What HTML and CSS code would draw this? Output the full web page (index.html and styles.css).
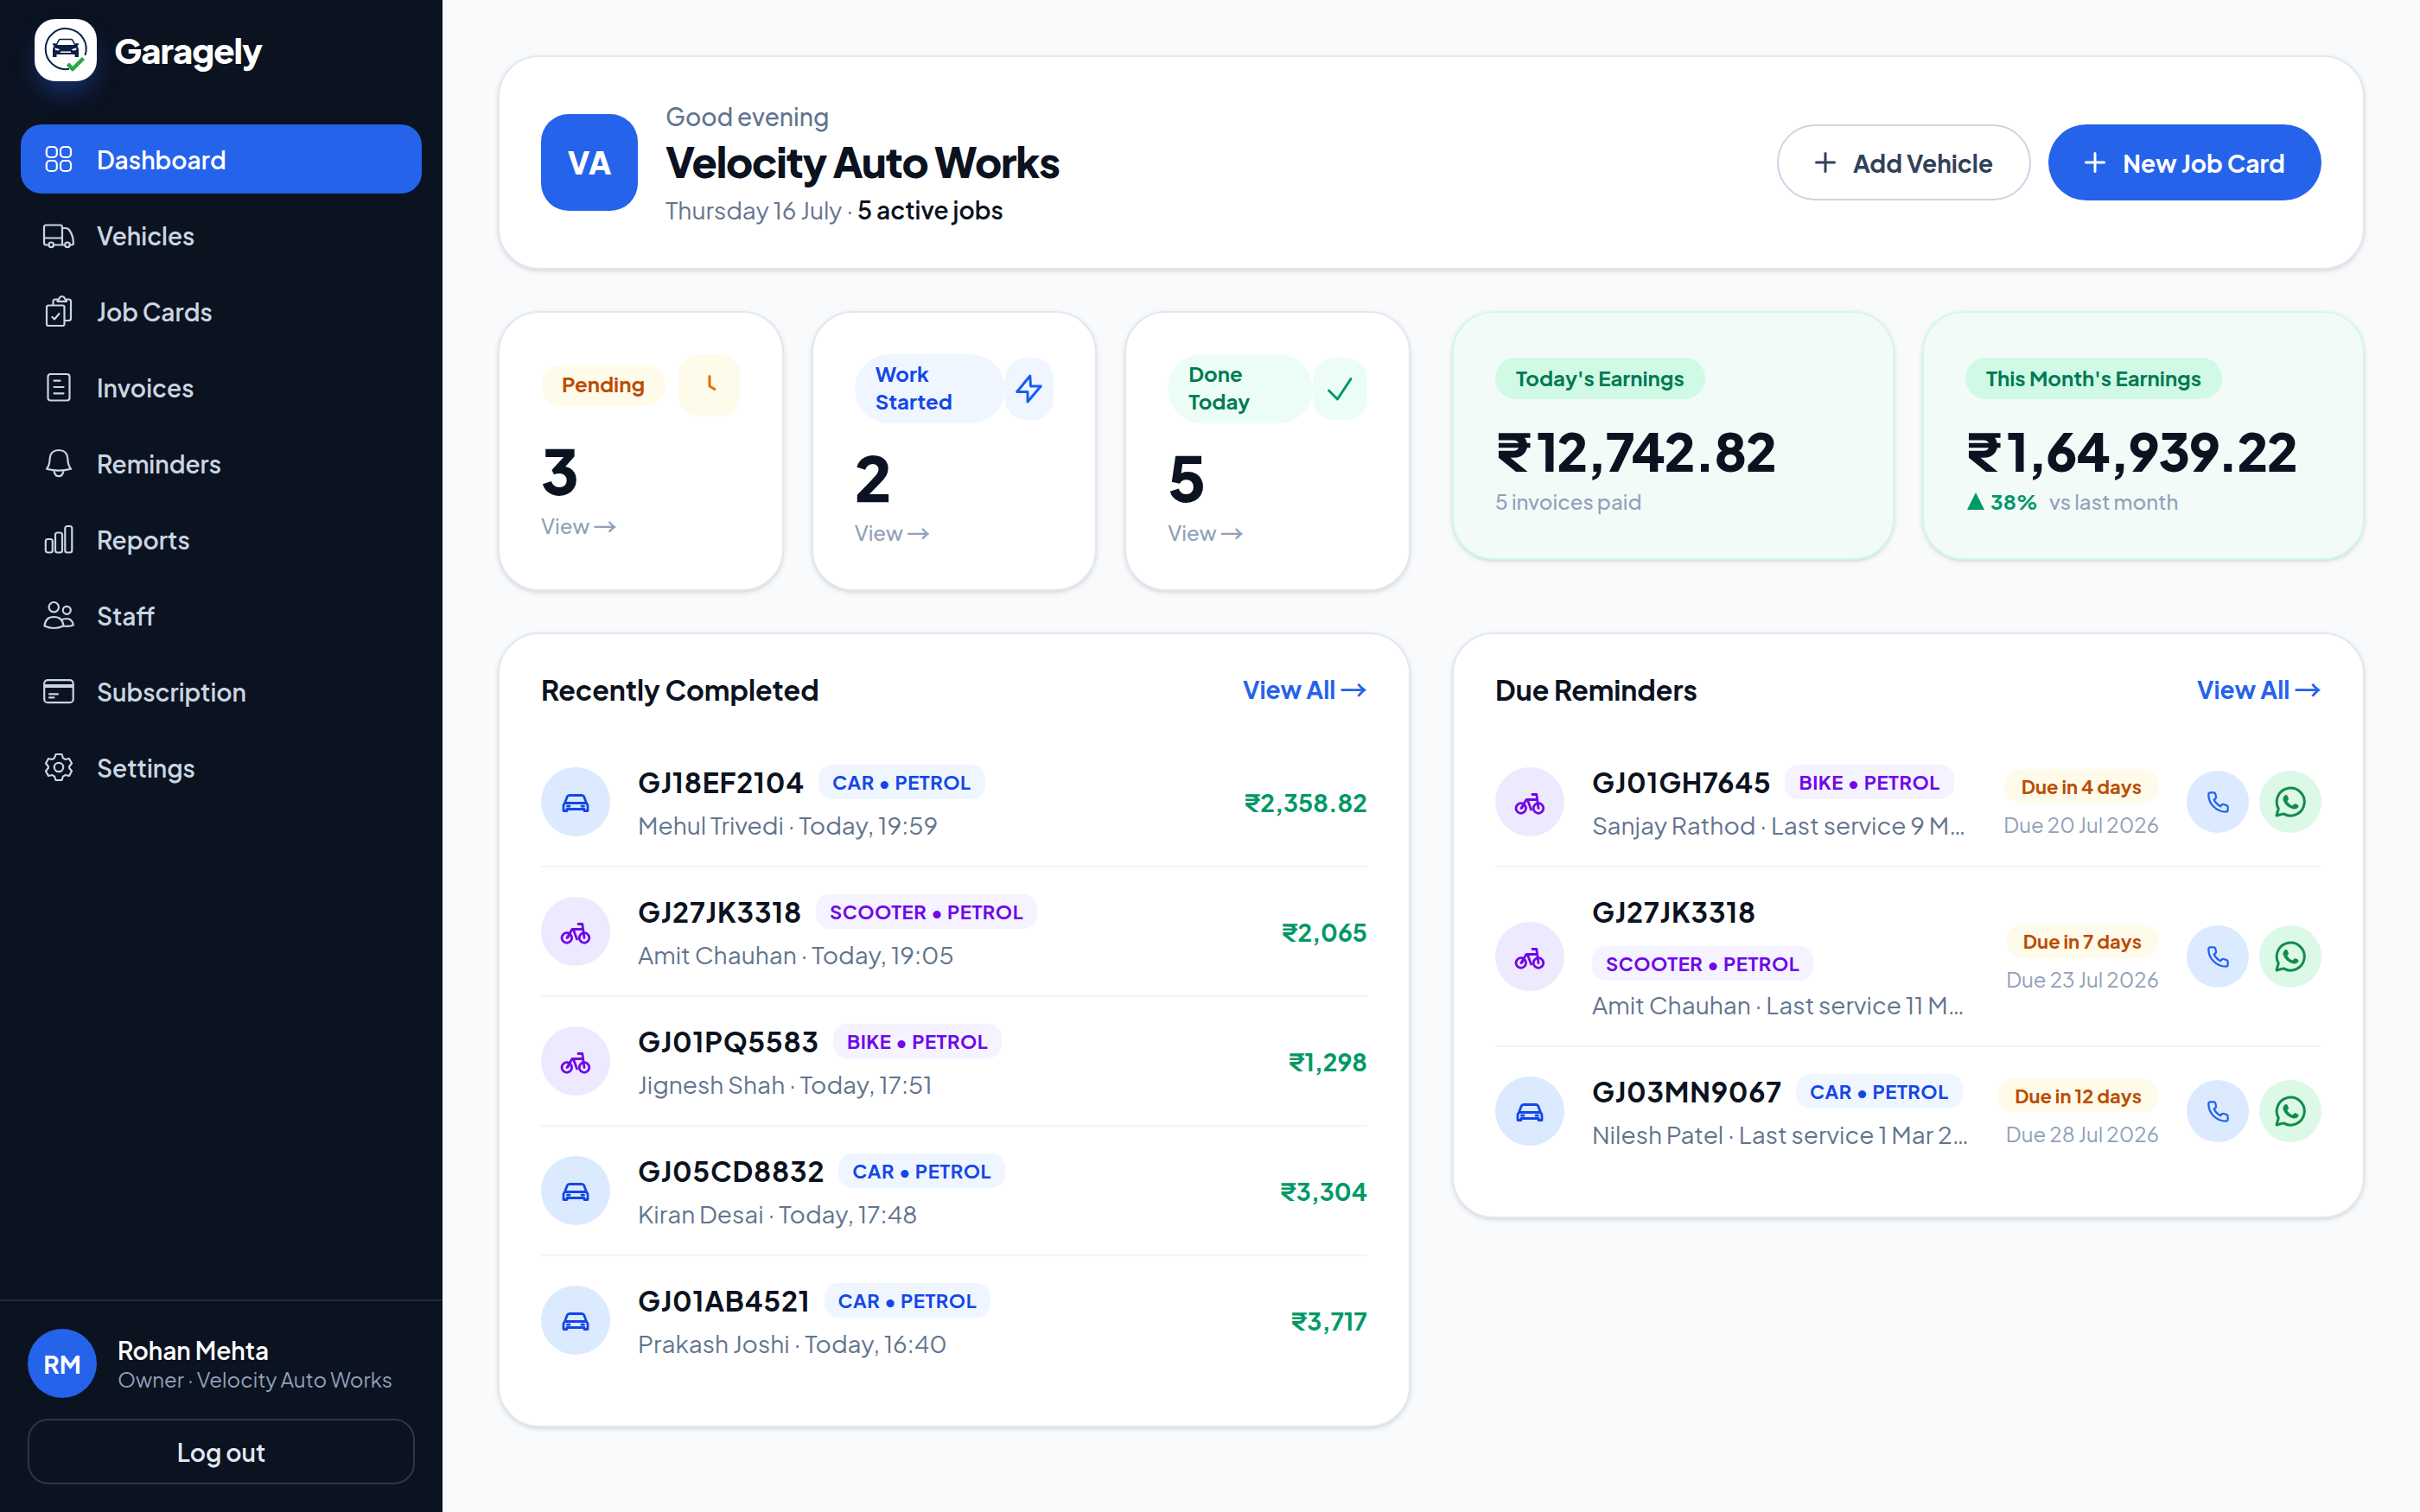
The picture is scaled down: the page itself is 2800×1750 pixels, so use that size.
FILE: index.html
```html
<!DOCTYPE html>
<html lang="en">
<head>
    <meta charset="utf-8">
    <title>Garagely</title>
    <link rel="stylesheet" href="styles.css">
</head>
<body>
    <svg class="sprite">
        <symbol id="car" viewBox="0 0 40 40">
            <path d="M7.500 21.500 L10.200 14.200 Q11 12.500 13 12.500 H27 Q29 12.500 29.800 14.200 L32.500 21.500 M7.500 21.500 H32.500 Q34 23 34 25 V30.500 H30 V28.500 H10 V30.500 H6 V25 Q6 23 7.500 21.500 M10.500 25.200 H13 M27 25.200 H29.500"/>
        </symbol>
        <symbol id="bike" viewBox="0 0 40 40">
            <circle cx="9.800" cy="27.500" r="5.800"/>
            <circle cx="30" cy="27.500" r="5.800"/>
            <path d="M10 27.500 L16 17.500 H26.500 M17.500 18 L21.500 29 M23 11.500 H27.800 L30 27.500 M14 21 L11 27"/>
        </symbol>
        <symbol id="phone" viewBox="0 0 24 24">
            <path d="M1.300 3.500 Q1.300 1.500 3.200 1.300 H7 Q8.300 1.300 8.800 2.600 L9.700 6 Q10 7 9 7.900 L7.300 9.200 Q9.500 14 14.600 16.600 L16 14.900 Q16.800 14 18 14.400 L21.400 15.500 Q22.700 16 22.700 17.300 V20.800 Q22.600 22.700 20.500 22.700 Q12.500 22.600 6.800 16.800 Q1.300 11 1.300 3.500 Z"/>
        </symbol>
        <symbol id="whatsapp" viewBox="0 0 36 36">
            <path class="bubble" d="M2 34 L4.300 25.900 A16 16 0 1 1 10.200 31.900 Z"/>
            <path class="handset" d="M9.500 14.500 Q9.600 11.500 12 10.200 Q13.800 9.800 14.500 10.800 L16 14.300 Q16.200 15.300 14.300 17.200 Q16.700 21.200 20.600 22.600 L22.600 20.500 Q23.300 19.900 24.200 20.300 L27.300 21.900 Q28 22.500 27 24.500 Q25 27 21.500 26.500 Q12.500 24 9.500 16 Z"/>
        </symbol>
        <symbol id="plus" viewBox="0 0 24 24">
            <path d="M12 1.500 V22.500 M1.500 12 H22.500"/>
        </symbol>
    </svg>

    <div class="layout">
        <aside class="sidebar">
            <div class="brand">
                <div class="brand_logo">
                    <svg viewBox="0 0 72 72">
                        <path d="M40 57.800 A23.500 23.500 0 1 1 58.500 42" fill="none" stroke="#0b1f44" stroke-width="2"/>
                        <path d="M25 30.500 L28 24.500 Q28.500 23.500 30 23.500 H42 Q43.500 23.500 44 24.500 L47 30.500" fill="none" stroke="#0b1f44" stroke-width="1.600"/>
                        <path class="solid" d="M20.500 28.500 L24 28 L26 30 H46 L48 28 L51.500 28.500 L49.500 31.500 Q51 33 51 36 V44 H46.500 V41 H25.500 V44 H21 V36 Q21 33 22.500 31.500 Z" fill="#0b1f44"/>
                        <path class="solid" d="M23.500 33.500 L29 35 L28 36.500 L24 36 Z M48.500 33.500 L43 35 L44 36.500 L48 36 Z M30 37.500 H42 V39 H30 Z" fill="#fff"/>
                        <path d="M38.500 52 L44 58 L56.500 45.500" fill="none" stroke="#28a745" stroke-width="4.500"/>
                    </svg>
                </div>
                <span class="brand_name">Garagely</span>
            </div>

            <nav class="nav">
                <a class="nav_item active">
                    <svg viewBox="0 0 48 48"><rect x="9.800" y="10" width="12" height="12" rx="4"/><rect x="26" y="10" width="12" height="12" rx="4"/><rect x="9.800" y="26" width="12" height="12" rx="4"/><rect x="26" y="26" width="12" height="12" rx="4"/></svg>
                    <span>Dashboard</span>
                </a>
                <a class="nav_item">
                    <svg viewBox="0 0 48 48"><path d="M12 35.500 H9.500 Q7 35.500 7 33 V15 Q7 12.500 9.500 12.500 H25.500 Q28 12.500 28 15 V35.500 M18.500 35.500 H31 M37 35.500 H38.500 Q41 35.500 41 33 Q40.500 24 36 18 Q34.500 16 32 16 H28 M7 27.500 H28"/><circle cx="15.300" cy="35.300" r="2.800"/><circle cx="34" cy="35.300" r="2.800"/></svg>
                    <span>Vehicles</span>
                </a>
                <a class="nav_item">
                    <svg viewBox="0 0 48 48"><rect x="10" y="17.500" width="20.500" height="23.500" rx="2"/><path d="M17.500 17 V13 Q17.500 10.500 20 10.500 H22.500 M33 10.500 H35.500 Q38 10.500 38 13 V32.500 Q38 35 35.500 35 H31 M16.500 31 L19 33.500 L24.500 27"/><path d="M22.500 12.800 V11.500 Q24.500 10.500 25 8.500 Q27.500 5.500 30.500 8.500 Q31 10.500 33 11.500 V12.800 Z"/></svg>
                    <span>Job Cards</span>
                </a>
                <a class="nav_item">
                    <svg viewBox="0 0 48 48"><rect x="11.500" y="9" width="25" height="30.500" rx="3"/><path d="M18.500 16.700 H25.500 M18.500 24 H29.500 M18.500 31.300 H29.500"/></svg>
                    <span>Invoices</span>
                </a>
                <a class="nav_item">
                    <svg viewBox="0 0 48 48"><path d="M24 9 Q33.500 9 34.300 18.500 C34.500 25 36 28.500 38 30.800 Q24 34.500 10 30.800 C12 28.500 13.500 25 13.700 18.500 Q14.500 9 24 9 Z M18.500 33 Q19.500 39.200 24 39.200 Q28.500 39.200 29.500 33"/></svg>
                    <span>Reminders</span>
                </a>
                <a class="nav_item">
                    <svg viewBox="0 0 48 48"><rect x="8.800" y="24" width="8" height="15.500" rx="2.500"/><rect x="20" y="16.500" width="8" height="23" rx="2.500"/><rect x="31.300" y="9" width="8" height="30.500" rx="2.500"/></svg>
                    <span>Reports</span>
                </a>
                <a class="nav_item">
                    <svg viewBox="0 0 48 48"><circle cx="18.300" cy="14.700" r="5.700"/><circle cx="33.300" cy="18.300" r="4.500"/><path d="M7.500 36.500 Q8.500 26 18.300 26 Q28.500 26 29.500 36.500 Q18.300 41.500 7.500 36.500 Z M27.500 29.500 Q30 28 33 28 Q39.500 28 40.800 35.500 Q36 37.500 29.500 36.500"/></svg>
                    <span>Staff</span>
                </a>
                <a class="nav_item">
                    <svg viewBox="0 0 48 48"><rect x="7.200" y="11.200" width="33.500" height="26" rx="4"/><path d="M7.500 18 H40.500" stroke-width="4" stroke-linecap="butt"/><path d="M13 27.300 H23 M13 31.300 H18.500"/></svg>
                    <span>Subscription</span>
                </a>
                <a class="nav_item">
                    <svg viewBox="0 0 48 48"><path d="M20.500 9 H27.500 L29 13.500 Q30.500 14 31.500 15 L36 14 L39 19.500 L36.200 23 V25 L39 28.500 L36 34 L31.500 33 Q30.500 34 29 34.500 L27.500 39 H20.500 L19 34.500 Q17.500 34 16.500 33 L12 34 L9 28.500 L11.800 25 V23 L9 19.500 L12 14 L16.500 15 Q17.500 14 19 13.500 Z"/><circle cx="24" cy="24" r="5.200"/></svg>
                    <span>Settings</span>
                </a>
            </nav>

            <div class="account">
                <div class="account_user">
                    <div class="account_avatar">RM</div>
                    <div>
                        <div class="account_name">Rohan Mehta</div>
                        <div class="account_role">Owner · Velocity Auto Works</div>
                    </div>
                </div>
                <button class="logout">Log out</button>
            </div>
        </aside>

        <main class="content">
            <header class="card hero">
                <div class="hero_avatar">VA</div>
                <div class="hero_text">
                    <div class="hero_greeting">Good evening</div>
                    <h1>Velocity Auto Works</h1>
                    <div class="hero_date">Thursday 16 July · <b>5 active jobs</b></div>
                </div>
                <div class="hero_actions">
                    <button class="btn btn_outline"><svg><use href="#plus"/></svg>Add Vehicle</button>
                    <button class="btn btn_primary"><svg><use href="#plus"/></svg>New Job Card</button>
                </div>
            </header>

            <div class="columns">
                <div class="stats">
                    <div class="card stat amber">
                        <div class="stat_top">
                            <span class="pill">Pending</span>
                            <span class="tile"><svg viewBox="0 0 48 48"><path d="M24 13.500 V25 L30 28.500"/></svg></span>
                        </div>
                        <div class="stat_value">3</div>
                        <div class="stat_link">View <i>→</i></div>
                    </div>
                    <div class="card stat blue">
                        <div class="stat_top">
                            <span class="pill wrap">Work Started</span>
                            <span class="tile"><svg viewBox="0 0 48 48"><path d="M24.800 9 L9.700 27.500 H22 V39 L37.300 21 H25.500 Z"/></svg></span>
                        </div>
                        <div class="stat_value">2</div>
                        <div class="stat_link">View <i>→</i></div>
                    </div>
                    <div class="card stat green">
                        <div class="stat_top">
                            <span class="pill wrap">Done Today</span>
                            <span class="tile"><svg viewBox="0 0 48 48"><path d="M10.500 26 L20.500 36 L36 12.500"/></svg></span>
                        </div>
                        <div class="stat_value">5</div>
                        <div class="stat_link">View <i>→</i></div>
                    </div>
                </div>

                <div class="earnings">
                    <div class="card earning">
                        <span class="pill">Today's Earnings</span>
                        <div class="earning_value"><span>₹</span>12,742.82</div>
                        <div class="earning_note">5 invoices paid</div>
                    </div>
                    <div class="card earning">
                        <span class="pill">This Month's Earnings</span>
                        <div class="earning_value"><span>₹</span>1,64,939.22</div>
                        <div class="earning_note"><svg class="up" viewBox="0 0 20 20"><path d="M10 0 L20 20 H0 Z"/></svg><b>38%</b>vs last month</div>
                    </div>
                </div>

                <section class="card panel">
                    <div class="panel_head"><h2>Recently Completed</h2><a>View All <i>→</i></a></div>
                    <div class="row car">
                        <div class="row_icon"><svg><use href="#car"/></svg></div>
                        <div class="row_text">
                            <div class="row_title"><span class="plate">GJ18EF2104</span><span class="tag">CAR • PETROL</span></div>
                            <div class="row_sub">Mehul Trivedi · Today, 19:59</div>
                        </div>
                        <div class="amount">₹2,358.82</div>
                    </div>
                    <div class="row bike">
                        <div class="row_icon"><svg><use href="#bike"/></svg></div>
                        <div class="row_text">
                            <div class="row_title"><span class="plate">GJ27JK3318</span><span class="tag">SCOOTER • PETROL</span></div>
                            <div class="row_sub">Amit Chauhan · Today, 19:05</div>
                        </div>
                        <div class="amount">₹2,065</div>
                    </div>
                    <div class="row bike">
                        <div class="row_icon"><svg><use href="#bike"/></svg></div>
                        <div class="row_text">
                            <div class="row_title"><span class="plate">GJ01PQ5583</span><span class="tag">BIKE • PETROL</span></div>
                            <div class="row_sub">Jignesh Shah · Today, 17:51</div>
                        </div>
                        <div class="amount">₹1,298</div>
                    </div>
                    <div class="row car">
                        <div class="row_icon"><svg><use href="#car"/></svg></div>
                        <div class="row_text">
                            <div class="row_title"><span class="plate">GJ05CD8832</span><span class="tag">CAR • PETROL</span></div>
                            <div class="row_sub">Kiran Desai · Today, 17:48</div>
                        </div>
                        <div class="amount">₹3,304</div>
                    </div>
                    <div class="row car">
                        <div class="row_icon"><svg><use href="#car"/></svg></div>
                        <div class="row_text">
                            <div class="row_title"><span class="plate">GJ01AB4521</span><span class="tag">CAR • PETROL</span></div>
                            <div class="row_sub">Prakash Joshi · Today, 16:40</div>
                        </div>
                        <div class="amount">₹3,717</div>
                    </div>
                </section>

                <section class="card panel">
                    <div class="panel_head"><h2>Due Reminders</h2><a>View All <i>→</i></a></div>
                    <div class="row bike">
                        <div class="row_icon"><svg><use href="#bike"/></svg></div>
                        <div class="row_text">
                            <div class="row_title"><span class="plate">GJ01GH7645</span><span class="tag">BIKE • PETROL</span></div>
                            <div class="row_sub">Sanjay Rathod · Last service 9 M…</div>
                        </div>
                        <div class="due"><span class="due_pill">Due in 4 days</span><span class="due_date">Due 20 Jul 2026</span></div>
                        <div class="contact">
                            <a class="call"><svg><use href="#phone"/></svg></a>
                            <a class="chat"><svg><use href="#whatsapp"/></svg></a>
                        </div>
                    </div>
                    <div class="row bike tall">
                        <div class="row_icon"><svg><use href="#bike"/></svg></div>
                        <div class="row_text">
                            <div class="row_title"><span class="plate">GJ27JK3318</span><span class="tag">SCOOTER • PETROL</span></div>
                            <div class="row_sub">Amit Chauhan · Last service 11 M…</div>
                        </div>
                        <div class="due"><span class="due_pill">Due in 7 days</span><span class="due_date">Due 23 Jul 2026</span></div>
                        <div class="contact">
                            <a class="call"><svg><use href="#phone"/></svg></a>
                            <a class="chat"><svg><use href="#whatsapp"/></svg></a>
                        </div>
                    </div>
                    <div class="row car">
                        <div class="row_icon"><svg><use href="#car"/></svg></div>
                        <div class="row_text">
                            <div class="row_title"><span class="plate">GJ03MN9067</span><span class="tag">CAR • PETROL</span></div>
                            <div class="row_sub">Nilesh Patel · Last service 1 Mar 2…</div>
                        </div>
                        <div class="due"><span class="due_pill">Due in 12 days</span><span class="due_date">Due 28 Jul 2026</span></div>
                        <div class="contact">
                            <a class="call"><svg><use href="#phone"/></svg></a>
                            <a class="chat"><svg><use href="#whatsapp"/></svg></a>
                        </div>
                    </div>
                </section>
            </div>
        </main>
    </div>
</body>
</html>
```

FILE: styles.css
```css
* {
    box-sizing: border-box;
}

body {
    margin: 0;
    background-color: #f8fafc;
    color: #0b1220;
    font-family: "Plus Jakarta Sans", Inter, "Noto Sans", sans-serif;
    font-size: 28px;
}

h1, h2 {
    margin: 0;
}

/* arrows */
i {
    font-family: "Noto Sans CJK JP", sans-serif;
    font-size: 1.13em;
    font-style: normal;
    font-weight: 500;
    line-height: 1;
    vertical-align: -2px;
}

svg {
    display: block;
    fill: none;
    stroke: currentColor;
    stroke-linecap: round;
    stroke-linejoin: round;
}

button {
    font-family: inherit;
    font-size: 28px;
}

.sprite {
    display: none;
}

.layout {
    display: flex;
    height: 1750px;
}

/* sidebar */
.sidebar {
    display: flex;
    flex-direction: column;
    width: 512px;
    background-color: #0b1220;
    color: #cad5e2;
}

.brand {
    display: flex;
    align-items: center;
    gap: 20px;
    height: 144px;
    padding: 0 40px 28px;
}

.brand_logo {
    width: 72px;
    height: 72px;
    border-radius: 24px;
    background-color: #fff;
    box-shadow: 0 16px 32px -8px rgba(37, 99, 235, 0.5);
}

.brand_logo svg {
    stroke-linecap: butt;
}

.solid {
    stroke: none;
}

.brand_name {
    padding-bottom: 2px;
    color: #fff;
    font-size: 40px;
    font-weight: 800;
    letter-spacing: -1px;
}

.nav {
    display: flex;
    flex-direction: column;
    gap: 8px;
    padding: 0 24px;
    flex: 1;
}

.nav_item {
    display: flex;
    align-items: center;
    gap: 20px;
    height: 80px;
    padding: 0 20px;
    border-radius: 24px;
    font-weight: 600;
}

.nav_item svg {
    width: 48px;
    height: 48px;
    stroke-width: 2.2;
}

.nav_item.active {
    background-color: #2563eb;
    color: #fff;
}

.account {
    padding: 32px;
    border-top: 2px solid #232a36;
}

.account_user {
    display: flex;
    align-items: center;
    gap: 24px;
    margin-bottom: 24px;
}

.account_avatar {
    width: 80px;
    height: 80px;
    border-radius: 50%;
    background-color: #2563eb;
    color: #fff;
    font-weight: 700;
    line-height: 82px;
    text-align: center;
}

.account_name {
    padding-top: 1px;
    color: #fff;
    font-weight: 600;
    line-height: 34px;
}

.account_role {
    color: #90a1b9;
    font-size: 24px;
    line-height: 32px;
    white-space: nowrap;
}

.logout {
    display: block;
    width: 100%;
    height: 76px;
    border: 2px solid #303641;
    border-radius: 24px;
    background: none;
    color: #e2e8f0;
    font-weight: 600;
}

/* content */
.content {
    flex: 1;
    padding: 64px;
}

.card {
    border: 2px solid #e2e8f0;
    border-radius: 48px;
    background-color: #fff;
    box-shadow: 0 2px 6px rgba(0, 0, 0, 0.1), 0 2px 4px -2px rgba(0, 0, 0, 0.1);
}

.hero {
    display: flex;
    align-items: center;
    height: 248px;
    padding: 0 48px;
    margin-bottom: 48px;
}

.hero_avatar {
    width: 112px;
    height: 112px;
    margin-right: 32px;
    border-radius: 32px;
    background-color: #2563eb;
    color: #fff;
    font-size: 36px;
    font-weight: 800;
    line-height: 112px;
    text-align: center;
}

.hero_text {
    flex: 1;
    padding-top: 6px;
}

.hero_greeting {
    color: #62748e;
    font-weight: 500;
    line-height: 40px;
}

.hero h1 {
    font-size: 48px;
    font-weight: 800;
    line-height: 64px;
    letter-spacing: -1.2px;
}

.hero_date {
    color: #62748e;
    line-height: 48px;
}

.hero_date b {
    color: #0b1220;
    font-weight: 600;
}

.hero_actions {
    display: flex;
    gap: 20px;
}

.btn {
    display: flex;
    align-items: center;
    justify-content: center;
    gap: 20px;
    height: 88px;
    border-radius: 44px;
    font-weight: 700;
}

.btn svg {
    width: 24px;
    height: 24px;
    stroke-width: 3;
}

.btn_outline {
    width: 294px;
    border: 2px solid #cad5e2;
    background-color: #fff;
    color: #314158;
}

.btn_primary {
    width: 316px;
    border: none;
    background-color: #2563eb;
    color: #fff;
}

.columns {
    display: grid;
    grid-template-columns: 1056px 1056px;
    gap: 48px;
    align-items: start;
}

.stats {
    display: grid;
    grid-template-columns: repeat(3, 1fr);
    gap: 32px;
    height: 324px;
}

.stat {
    padding: 48px;
}

.stat_top {
    display: flex;
    align-items: center;
    justify-content: space-between;
}

.pill {
    display: inline-block;
    padding: 7px 24px 9px;
    border-radius: 40px;
    font-size: 24px;
    font-weight: 700;
    line-height: 32px;
    white-space: nowrap;
}

.stat .pill {
    padding: 6px 24px 10px;
}

.pill.wrap {
    width: 174px;
    white-space: normal;
}

.green .pill.wrap {
    width: 168px;
}

.tile {
    display: flex;
    align-items: center;
    justify-content: center;
    width: 72px;
    height: 72px;
    border-radius: 24px;
}

.wrap + .tile {
    width: auto;
    flex: 1;
}

.tile svg {
    width: 48px;
    height: 48px;
    stroke-width: 3;
}

.amber .pill, .amber .tile {
    background-color: #fffbeb;
    color: #bb4d00;
}

.amber .tile {
    color: #e17100;
}

.blue .pill, .blue .tile {
    background-color: #eff6ff;
    color: #1447e6;
}

.blue .tile {
    color: #155dfc;
}

.green .pill, .green .tile {
    background-color: #ecfdf5;
    color: #007a55;
}

.green .tile {
    color: #009966;
}

.stat_value {
    margin-top: 26px;
    font-size: 72px;
    font-weight: 800;
    line-height: 72px;
}

.stat_link {
    margin-top: 12px;
    color: #90a1b9;
    font-size: 24px;
    font-weight: 500;
    line-height: 32px;
}

.earnings {
    display: grid;
    grid-template-columns: 1fr 1fr;
    gap: 32px;
}

.earning {
    height: 288px;
    padding: 52px 48px 0;
    border-color: #d0fae5;
    background-color: #f2fbf8;
}

.earning .pill {
    background-color: #d0fae5;
    color: #007a55;
}

.earning_value {
    margin-top: 24px;
    font-size: 60px;
    font-weight: 800;
    line-height: 72px;
    letter-spacing: -1.3px;
}

.earning_value span {
    margin-right: 8px;
}

.earning_note {
    display: flex;
    align-items: center;
    margin-top: 6px;
    color: #90a1b9;
    font-size: 24px;
    font-weight: 500;
    line-height: 32px;
}

.earning_note b {
    margin: 0 13px 0 7px;
    color: #009966;
    font-weight: 700;
}

.up {
    width: 20px;
    height: 20px;
    margin-left: 2px;
    fill: #009966;
    stroke: none;
}

/* lists */
.panel {
    padding: 48px;
}

.panel_head {
    display: flex;
    align-items: center;
    justify-content: space-between;
    height: 31px;
    margin-bottom: 41px;
}

.panel_head h2 {
    font-size: 32px;
    font-weight: 700;
}

.panel_head a {
    color: #2563eb;
    font-weight: 700;
}

.row {
    display: flex;
    align-items: center;
    height: 150px;
    border-bottom: 2px solid #f1f5f9;
}

.row.tall {
    height: 208px;
}

.row:last-child {
    height: 148px;
    border-bottom: none;
}

.row_icon {
    display: flex;
    align-items: center;
    justify-content: center;
    width: 80px;
    height: 80px;
    margin-right: 32px;
    border-radius: 50%;
}

.row_icon svg {
    width: 40px;
    height: 40px;
    stroke-width: 2.8;
}

.car .row_icon {
    background-color: #dbeafe;
    color: #1447e6;
}

.bike .row_icon {
    background-color: #ede9fe;
    color: #7008e7;
}

.row_text {
    flex: 1;
    padding-top: 1px;
    white-space: nowrap;
}

.row_title {
    display: flex;
    align-items: center;
    gap: 16px;
    height: 40px;
}

.tall .row_title {
    flex-direction: column;
    align-items: flex-start;
    gap: 20px;
    height: 100px;
}

.plate {
    font-size: 32px;
    font-weight: 700;
    line-height: 40px;
    letter-spacing: 0.8px;
}

.tag {
    padding: 0 16px;
    border-radius: 16px;
    font-size: 22px;
    font-weight: 700;
    line-height: 40px;
    letter-spacing: 0.5px;
}

.car .tag {
    background-color: #eff6ff;
    color: #1447e6;
}

.bike .tag {
    background-color: #f5f3ff;
    color: #7008e7;
}

.row_sub {
    margin-top: 12px;
    color: #62748e;
    line-height: 36px;
}

.tall .row_sub {
    margin-top: 10px;
}

.amount {
    color: #009966;
    font-weight: 700;
}

.due {
    display: flex;
    flex-direction: column;
    align-items: flex-end;
    margin-right: 32px;
    white-space: nowrap;
}

.due_pill {
    margin-top: 4px;
    padding: 0 20px;
    border-radius: 20px;
    background-color: #fffbeb;
    color: #bb4d00;
    font-size: 22px;
    font-weight: 700;
    line-height: 40px;
}

.due_date {
    margin-top: 8px;
    color: #90a1b9;
    font-size: 24px;
    line-height: 32px;
}

.contact {
    display: flex;
    gap: 12px;
}

.contact a {
    display: flex;
    align-items: center;
    justify-content: center;
    width: 72px;
    height: 72px;
    border-radius: 50%;
}

.call {
    background-color: #dbeafe;
    color: #2563eb;
}

.call svg {
    width: 25px;
    height: 25px;
    stroke-width: 2.2;
}

.chat {
    background-color: #dcf8e6;
    color: #128c4a;
}

.chat svg {
    width: 36px;
    height: 36px;
}

.bubble {
    stroke-width: 3;
}

.handset {
    fill: currentColor;
    stroke: none;
}
```
